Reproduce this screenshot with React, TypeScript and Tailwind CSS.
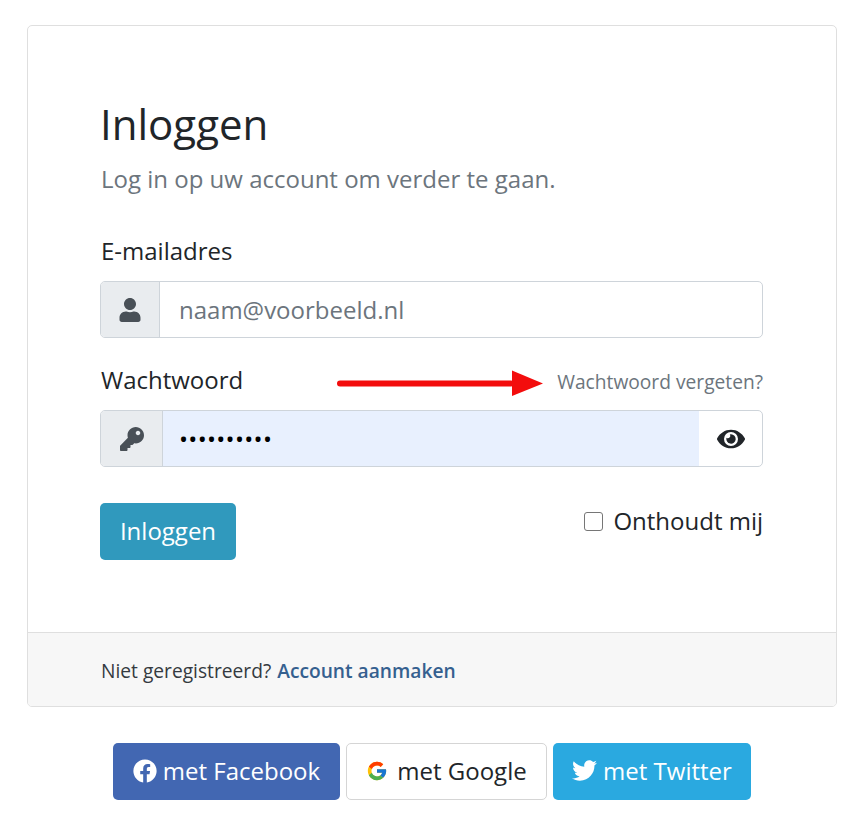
import { FaUser, FaKey, FaEye, FaFacebook, FaTwitter } from "react-icons/fa";
import { FcGoogle } from "react-icons/fc";

export default function App() {
  return (
    <div className="min-h-[829px] bg-white pt-[25px] px-[27px] font-['Open_Sans',sans-serif] text-[#212529]">
      <div className="w-[810px] h-[682px] flex flex-col rounded-[5px] border border-[#dfdfdf] bg-white overflow-hidden">
        <div className="flex-1 pl-[72px] pr-[73px] pt-[69px]">
          <h1 className="text-[42px] leading-[58px]">Inloggen</h1>
          <p className="mt-[11px] ml-px text-[24px] leading-[30px] text-[#6c757d]">Log in op uw account om verder te gaan.</p>

          <label className="block mt-[42px] ml-px text-[24px] leading-[30px]">E-mailadres</label>
          <div className="mt-[15px] flex h-[57px] rounded-[5px] border border-[#ced4da] overflow-hidden">
            <div className="w-[59px] flex items-center justify-center bg-[#e9ecef] border-r border-[#ced4da] text-[#495057]">
              <FaUser className="w-[22px] h-[24px]" />
            </div>
            <div className="flex-1 flex items-center pl-[19px] text-[24px] text-[#6c757d]">naam@voorbeeld.nl</div>
          </div>

          <div className="relative mt-[27px] flex items-center justify-between h-[30px]">
            <label className="ml-px text-[24px] leading-[30px]">Wachtwoord</label>
            <svg className="absolute left-[237px] top-[4px] w-[207px] h-[28px]" viewBox="0 0 207 28">
              <rect x="0" y="11.5" width="177" height="6" rx="3" fill="#f30d0d" />
              <polygon points="175,1.5 206,14.5 175,27" fill="#f30d0d" />
            </svg>
            <a className="mt-[4px] text-[19.2px] leading-[26px] text-[#6c757d]">Wachtwoord vergeten?</a>
          </div>

          <div className="mt-[15px] flex h-[57px] rounded-[5px] border border-[#ced4da] overflow-hidden">
            <div className="w-[62px] flex items-center justify-center bg-[#e9ecef] border-r border-[#ced4da] text-[#495057]">
              <FaKey className="w-[24px] h-[24px]" />
            </div>
            <div className="flex-1 flex items-center pl-[16px] bg-[#e8f0fe] text-[24px] tracking-[0.3px] text-black">••••••••••</div>
            <div className="w-[63px] flex items-center justify-center text-[#212529]">
              <FaEye className="w-[28px] h-[28px]" />
            </div>
          </div>

          <div className="mt-[36px] flex items-start justify-between">
            <button className="h-[57px] w-[136px] pb-[2px] rounded-[5px] bg-[#3099bd] text-white text-[24px]">Inloggen</button>
            <label className="mt-[3px] flex items-center gap-[10px] text-[24px] leading-[30px]">
              <span className="w-[19px] h-[19px] rounded-[3px] border border-[#767676] bg-white" />
              Onthoudt mij
            </label>
          </div>
        </div>

        <div className="h-[74px] flex items-center pl-[73px] pt-[4px] border-t border-[#dfdfdf] bg-[#f7f7f7] text-[19.2px]">
          <span className="text-[#343a40]">Niet geregistreerd?</span>
          <a className="ml-[6px] font-semibold text-[#35608f]">Account aanmaken</a>
        </div>
      </div>

      <div className="mt-[36px] flex justify-center gap-[6px] pl-[5px] text-[24px]">
        <button className="h-[57px] w-[227px] pb-[2px] flex items-center justify-center gap-[6px] rounded-[5px] bg-[#4267b2] text-white">
          <FaFacebook className="w-[24px] h-[24px]" />
          met Facebook
        </button>
        <button className="h-[57px] w-[201px] pb-[2px] flex items-center justify-center gap-[9px] rounded-[5px] border border-[#d5d5d5] bg-white text-[#212529]">
          <FcGoogle className="w-[22px] h-[22px]" />
          met Google
        </button>
        <button className="h-[57px] w-[198px] pb-[2px] flex items-center justify-center gap-[6px] rounded-[5px] bg-[#2aa9e0] text-white">
          <FaTwitter className="w-[25px] h-[25px]" />
          met Twitter
        </button>
      </div>
    </div>
  );
}
